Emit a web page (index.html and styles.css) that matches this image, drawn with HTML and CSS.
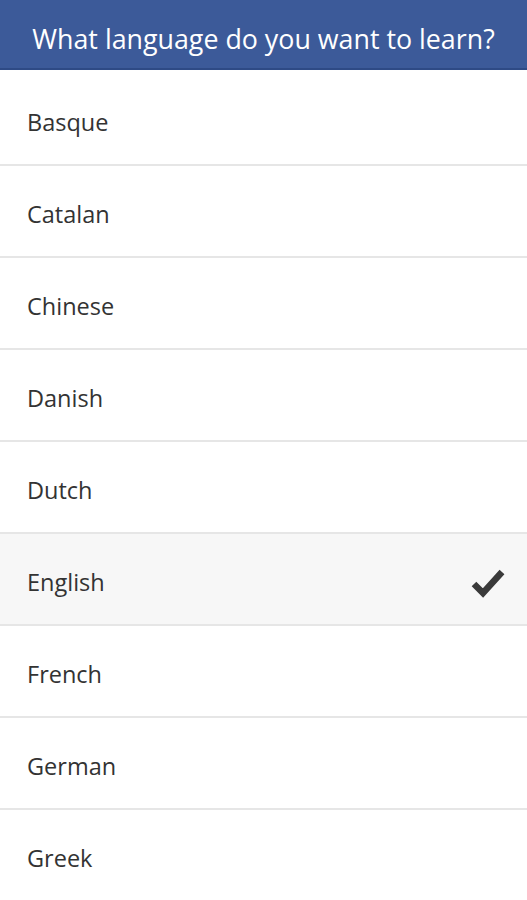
FILE: index.html
```html
<!DOCTYPE html>
<html>
<head>
<meta charset="utf-8">
<link rel="stylesheet" href="styles.css">
</head>
<body>
<header class="bar">What language do you want to learn?</header>
<ul class="list">
  <li class="item">Basque</li>
  <li class="item">Catalan</li>
  <li class="item">Chinese</li>
  <li class="item">Danish</li>
  <li class="item">Dutch</li>
  <li class="item selected">English
    <svg class="check" viewBox="0 0 34 32" width="34" height="32"><path d="M3 18 L12 27 L31 6" fill="none" stroke="#3a3a3a" stroke-width="6.5" stroke-linejoin="miter" stroke-linecap="butt"/></svg>
  </li>
  <li class="item">French</li>
  <li class="item">German</li>
  <li class="item">Greek</li>
</ul>
</body>
</html>
```
FILE: styles.css
```css
html, body {
  margin: 0;
  padding: 0;
  background: #ffffff;
  font-family: "Open Sans", "Noto Sans", sans-serif;
}
.bar {
  height: 70px;
  box-sizing: border-box;
  background: #3c5a99;
  border-bottom: 2px solid #2e4a85;
  color: #ffffff;
  font-size: 26.8px;
  display: flex;
  align-items: center;
  justify-content: center;
  padding-top: 8px;
}
.list {
  list-style: none;
  margin: 0;
  padding: 4px 0 0 0;
}
.item {
  height: 92px;
  box-sizing: border-box;
  border-bottom: 2px solid #e6e6e6;
  display: flex;
  align-items: center;
  justify-content: space-between;
  padding: 6px 22px 0 27px;
  font-size: 23.5px;
  color: #333333;
}
.item.selected {
  background: #f7f7f7;
}
.check {
  display: block;
}
```
